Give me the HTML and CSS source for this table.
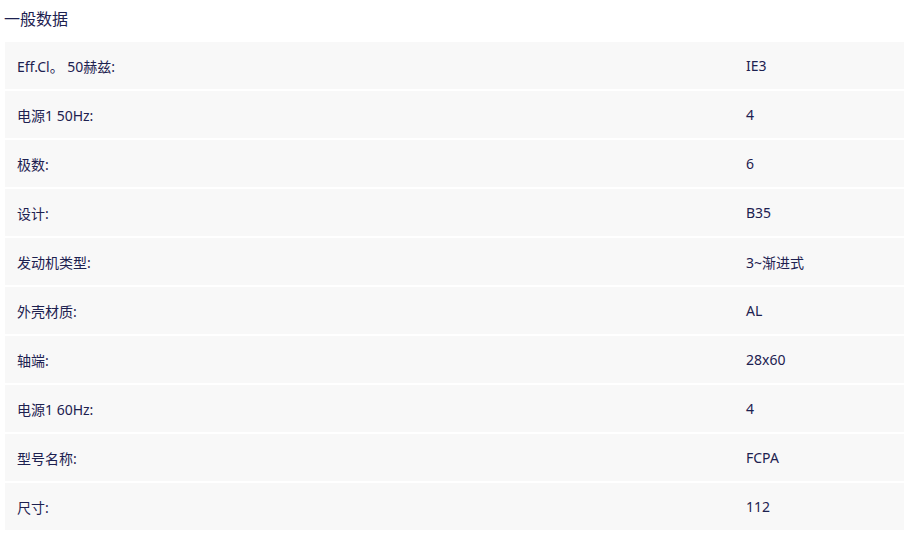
FILE: index.html
```html
<!DOCTYPE html>
<html lang="zh">
<head>
<meta charset="utf-8">
<link rel="stylesheet" href="styles.css">
</head>
<body>
<div class="section">
  <h2 class="title">一般数据</h2>
  <div class="table">
    <div class="row"><span class="label">Eff.Cl。 50赫兹:</span><span class="value">IE3</span></div>
    <div class="row"><span class="label">电源1 50Hz:</span><span class="value">4</span></div>
    <div class="row"><span class="label">极数:</span><span class="value">6</span></div>
    <div class="row"><span class="label">设计:</span><span class="value">B35</span></div>
    <div class="row"><span class="label">发动机类型:</span><span class="value">3~渐进式</span></div>
    <div class="row"><span class="label">外壳材质:</span><span class="value">AL</span></div>
    <div class="row"><span class="label">轴端:</span><span class="value">28x60</span></div>
    <div class="row"><span class="label">电源1 60Hz:</span><span class="value">4</span></div>
    <div class="row"><span class="label">型号名称:</span><span class="value">FCPA</span></div>
    <div class="row"><span class="label">尺寸:</span><span class="value">112</span></div>
  </div>
</div>
</body>
</html>
```

FILE: styles.css
```css
html, body {
  margin: 0;
  padding: 0;
  background: #ffffff;
}
body {
  font-family: "Noto Sans", "Noto Sans CJK SC", sans-serif;
  color: #1d2150;
}
.section {
  padding: 0 0 0 5px;
}
.title {
  margin: 0 0 0 -1px;
  padding: 8px 0 0 0;
  height: 42px;
  box-sizing: border-box;
  font-size: 16px;
  font-weight: 400;
  line-height: 22px;
  color: #1d2150;
}
.table {
  display: flex;
  flex-direction: column;
  gap: 2px;
}
.row {
  display: grid;
  grid-template-columns: 741px 1fr;
  align-items: center;
  height: 47px;
  background: #f8f8f8;
  font-size: 14px;
}
.label {
  padding-left: 12px;
}
```
